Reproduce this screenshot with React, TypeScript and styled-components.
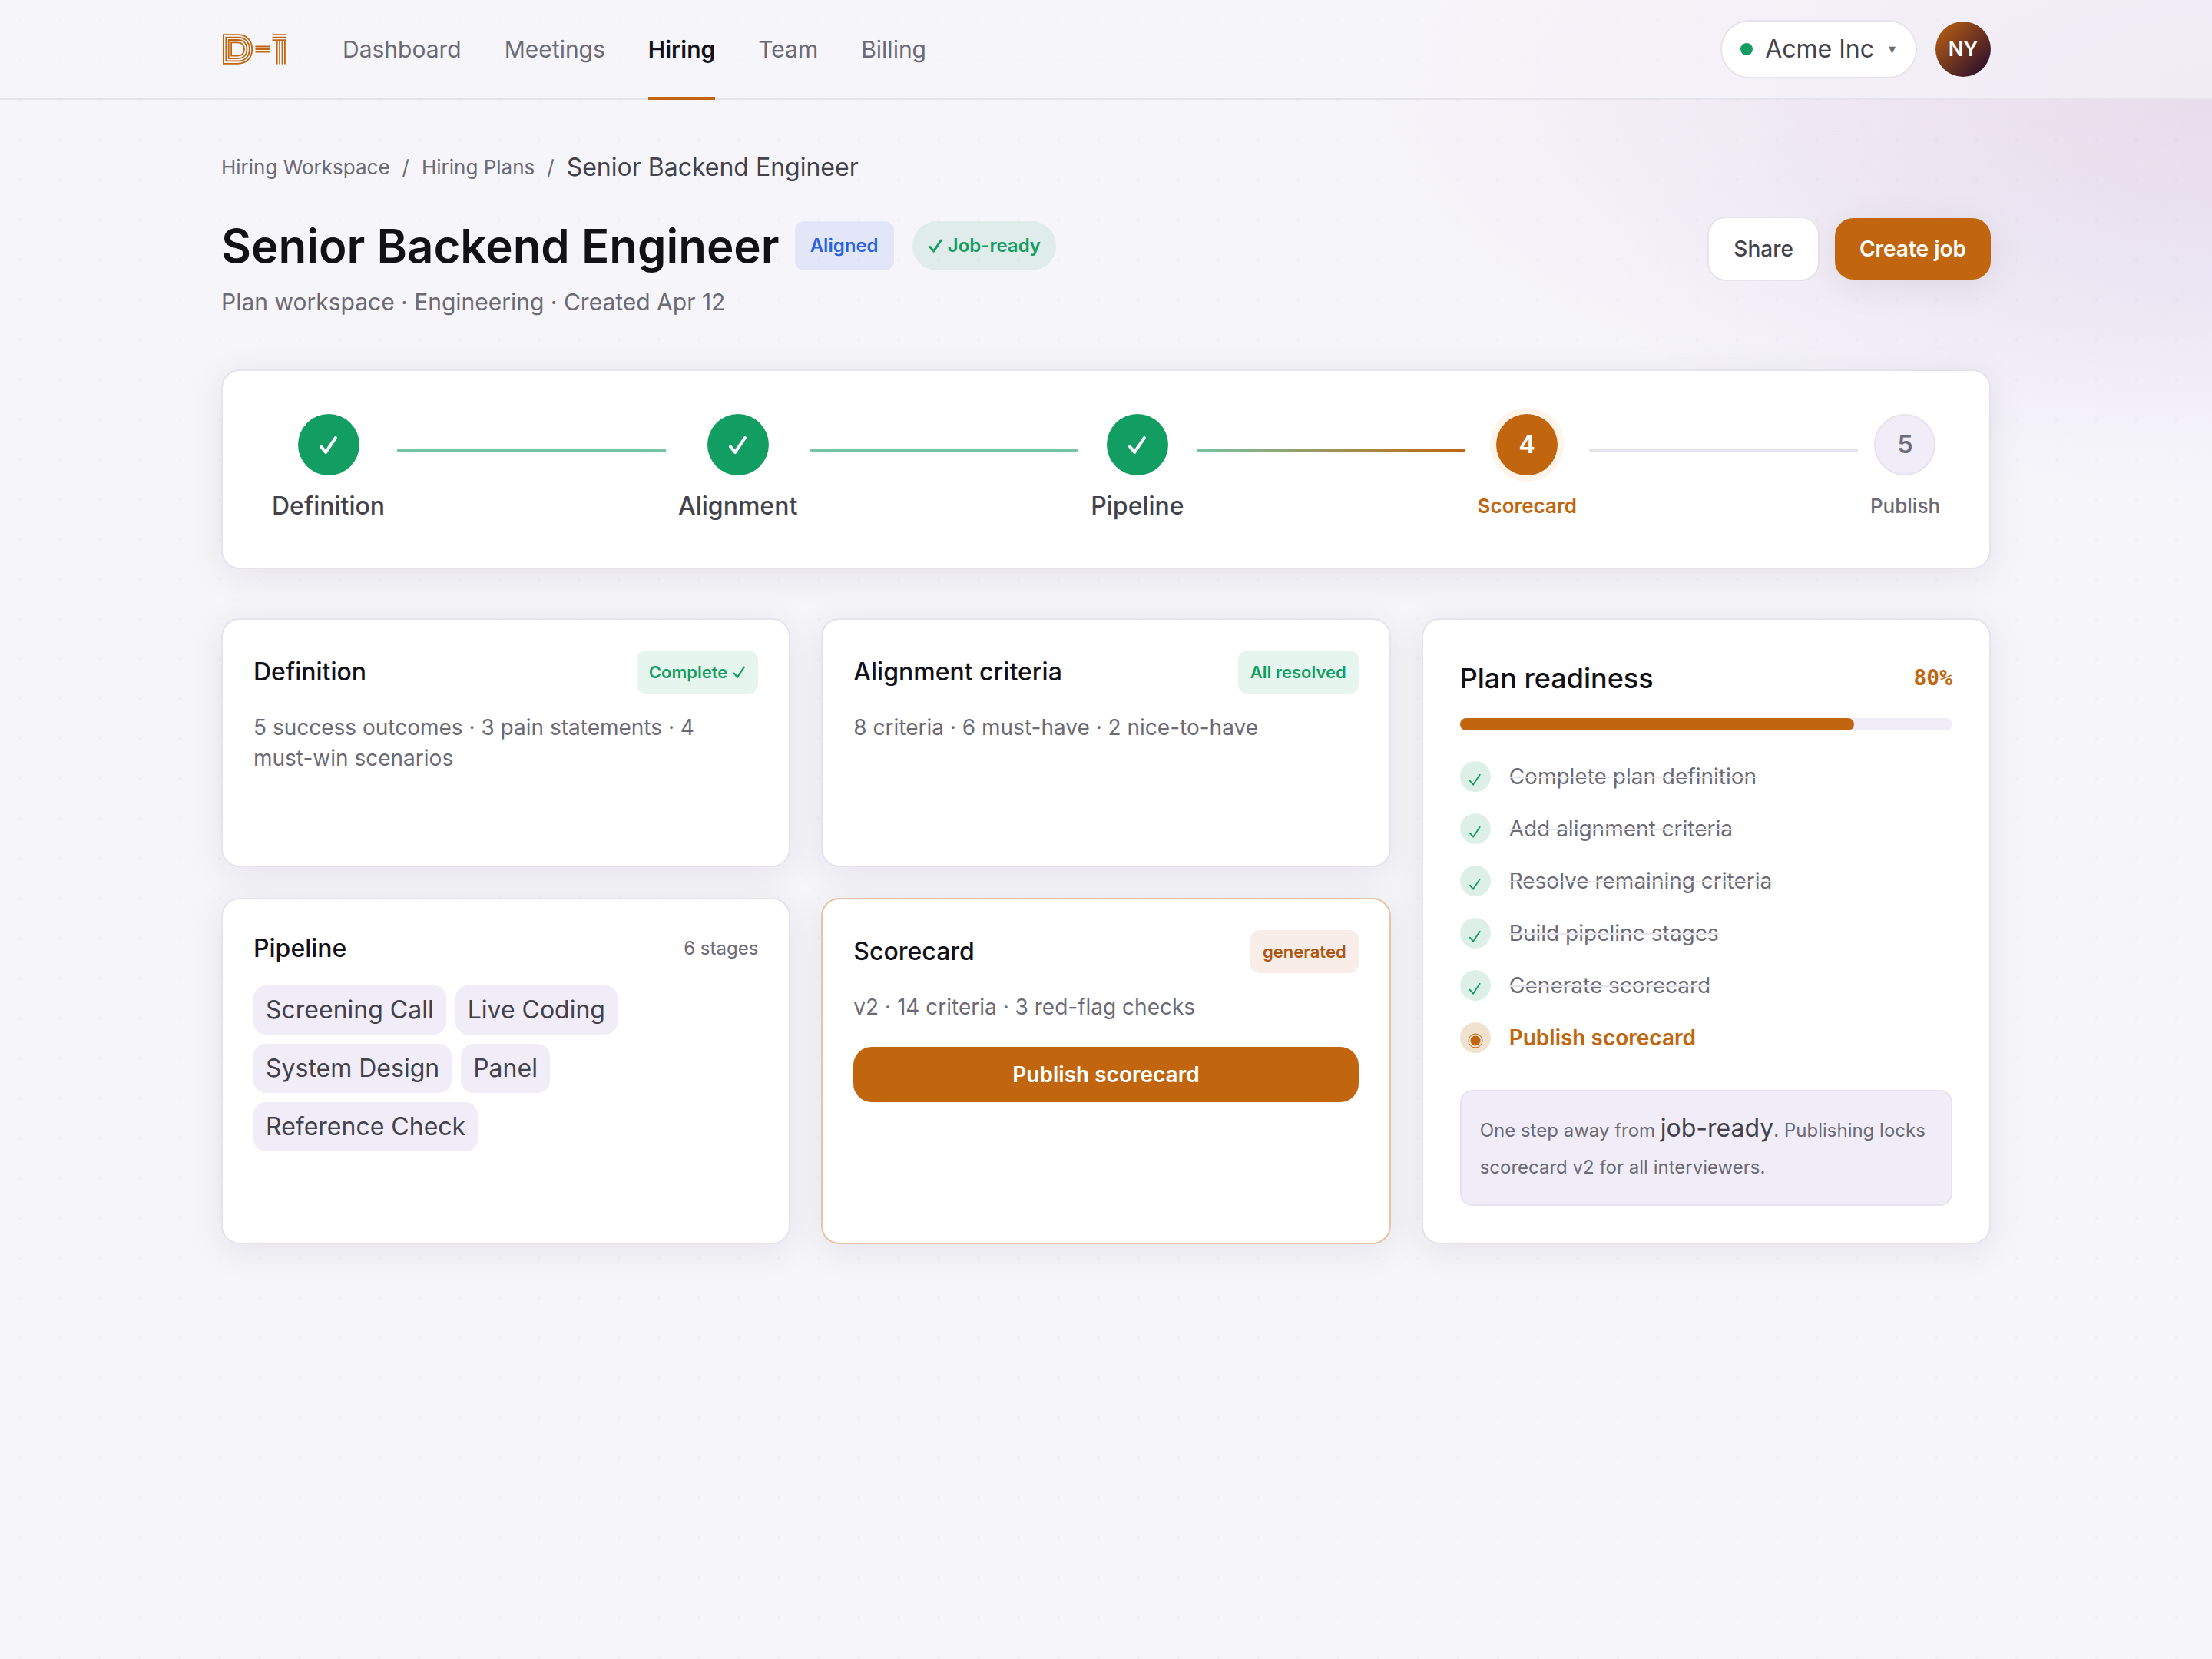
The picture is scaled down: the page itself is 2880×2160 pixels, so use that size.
import React from "react";
import styled, { createGlobalStyle, css } from "styled-components";

const color = {
  page: "#f6f5fa",
  card: "#ffffff",
  muted: "#f0edf8",
  line: "#e5e3eb",
  ink: "#121117",
  body: "#43424b",
  soft: "#6b6a75",
  brand: "#c2650f",
  green: "#129e62",
  blue: "#2b62e3",
};

const GlobalStyle = createGlobalStyle`
  *, *::before, *::after { box-sizing: border-box; }
  body {
    margin: 0;
    min-height: 100vh;
    background-color: ${color.page};
    background-image:
      radial-gradient(circle at center, rgba(40, 30, 80, 0.02) 0, rgba(40, 30, 80, 0.02) 2px, transparent 3px),
      radial-gradient(ellipse 800px 300px at 100% 360px, rgba(110, 90, 240, 0.04), transparent 100%),
      radial-gradient(ellipse 1100px 480px at 100% 110px, rgba(150, 60, 140, 0.13), transparent 100%);
    background-size: 52px 52px, 100% 100%, 100% 100%;
    background-repeat: repeat, no-repeat, no-repeat;
    color: ${color.body};
    font-family: Inter, "Liberation Sans", sans-serif;
    font-size: 32px;
    line-height: 48px;
  }
  h1, h2, p, ul, ol { margin: 0; padding: 0; }
  ul, ol { list-style: none; }
  button { font: inherit; color: inherit; cursor: pointer; }
  a { color: inherit; text-decoration: none; }
`;

const Header = styled.header`
  border-bottom: 2px solid ${color.line};
  background: rgba(246, 245, 250, 0.6);
`;

const HeaderInner = styled.div`
  display: flex;
  align-items: center;
  max-width: 2400px;
  height: 128px;
  margin: 0 auto;
  padding: 0 48px;
`;

const LogoLink = styled.a`
  display: flex;
  margin-right: 74px;
`;

const Nav = styled.nav`
  display: flex;
  gap: 56px;
  flex: 1;
`;

const NavLink = styled.a<{ $active?: boolean }>`
  position: relative;
  font-size: 30px;
  line-height: 128px;
  color: ${color.soft};
  ${(p) =>
    p.$active &&
    css`
      font-weight: 600;
      color: ${color.ink};
      &::after {
        content: "";
        position: absolute;
        left: 0;
        right: 0;
        bottom: -2px;
        height: 4px;
        background: ${color.brand};
      }
    `}
`;

const Account = styled.div`
  display: flex;
  align-items: center;
  gap: 24px;
`;

const OrgButton = styled.button`
  display: flex;
  align-items: center;
  gap: 16px;
  padding: 12px 24px;
  border: 2px solid ${color.line};
  border-radius: 38px;
  background: ${color.card};
`;

const StatusDot = styled.span`
  width: 16px;
  height: 16px;
  border-radius: 50%;
  background: ${color.green};
`;

const Caret = styled.span`
  width: 14px;
  font-size: 18px;
  text-align: center;
  color: ${color.soft};
`;

const Avatar = styled.button`
  width: 72px;
  height: 72px;
  padding: 0;
  border: 0;
  border-radius: 50%;
  background: linear-gradient(135deg, ${color.brand}, #1f0630);
  color: #fff;
  font-size: 26px;
  font-weight: 600;
`;

const Main = styled.main`
  max-width: 2400px;
  margin: 0 auto;
  padding: 64px 48px;
`;

const Crumbs = styled.ol`
  display: flex;
  align-items: center;
  gap: 16px;
  margin-bottom: 32px;
  font-size: 26px;
  color: ${color.soft};
`;

const CurrentCrumb = styled.li`
  font-size: 32px;
  color: ${color.body};
`;

const PageHead = styled.div`
  display: flex;
  align-items: flex-start;
  justify-content: space-between;
  margin-bottom: 64px;
`;

const TitleRow = styled.div`
  display: flex;
  align-items: center;
  gap: 20px;
  margin-bottom: 4px;
`;

const Badges = styled.div`
  display: flex;
  gap: 24px;
`;

const Title = styled.h1`
  font-size: 60px;
  line-height: 92px;
  font-weight: 600;
  color: ${color.ink};
`;

const Subtitle = styled.p`
  font-size: 30px;
  line-height: 47px;
  color: ${color.soft};
`;

const tones = {
  blue: css`
    background: rgba(60, 90, 235, 0.1);
    color: ${color.blue};
  `,
  green: css`
    background: rgba(18, 158, 98, 0.1);
    color: ${color.green};
  `,
  brand: css`
    background: #f8ede8;
    color: #ad5610;
  `,
};

const Badge = styled.span<{ $tone: keyof typeof tones; $large?: boolean; $pill?: boolean }>`
  padding: ${(p) => (p.$large ? "8px 20px" : "4px 16px")};
  border-radius: ${(p) => (p.$pill ? "32px" : "12px")};
  font-size: ${(p) => (p.$large ? "24px" : "22px")};
  font-weight: 600;
  white-space: nowrap;
  ${(p) => tones[p.$tone]}
`;

const Actions = styled.div`
  display: flex;
  align-items: center;
  gap: 20px;
  padding-top: 8px;
`;

const ShareButton = styled.button`
  padding: 16px 32px;
  border: 2px solid ${color.line};
  border-radius: 24px;
  background: ${color.card};
  font-size: 28px;
  font-weight: 500;
`;

const PrimaryButton = styled.button<{ $block?: boolean }>`
  border: 0;
  border-radius: 24px;
  background: ${color.brand};
  color: #fff;
  font-size: 28px;
  font-weight: 600;
  ${(p) =>
    p.$block
      ? css`
          display: block;
          width: 100%;
          margin-top: 32px;
          padding: 12px 32px;
        `
      : css`
          padding: 16px 32px;
          box-shadow: 0 8px 48px rgba(20, 17, 35, 0.08);
        `}
`;

const Card = styled.section<{ $accent?: boolean }>`
  padding: 40px;
  border: 2px solid ${(p) => (p.$accent ? "#e6c3a2" : color.line)};
  border-radius: 24px;
  background: ${color.card};
  box-shadow: 0 8px 48px rgba(20, 17, 35, 0.08);
`;

const Stepper = styled(Card).attrs({ as: "ol" })`
  display: flex;
  gap: 16px;
  margin-bottom: 64px;
  padding: 56px 64px;
`;

type StepState = "done" | "active" | "todo";

const Step = styled.li`
  display: flex;
  flex-direction: column;
  align-items: center;
  gap: 16px;
`;

const stepLook = {
  done: css`
    background: ${color.green};
    color: #fff;
  `,
  active: css`
    background: ${color.brand};
    color: #fff;
    box-shadow: 0 0 0 8px #fff4ea;
  `,
  todo: css`
    border: 2px solid ${color.line};
    background: ${color.muted};
    color: ${color.soft};
  `,
};

const StepCircle = styled.span<{ $state: StepState }>`
  display: flex;
  align-items: center;
  justify-content: center;
  width: 80px;
  height: 80px;
  border-radius: 50%;
  font-size: 32px;
  font-weight: 600;
  ${(p) => stepLook[p.$state]}
`;

const stepText = {
  done: css`
    font-weight: 500;
  `,
  active: css`
    font-size: 26px;
    font-weight: 600;
    color: ${color.brand};
  `,
  todo: css`
    font-size: 26px;
    font-weight: 500;
    color: ${color.soft};
  `,
};

const StepLabel = styled.span<{ $state: StepState }>`
  ${(p) => stepText[p.$state]}
`;

const connectorFill = {
  done: "#77c3a3",
  active: `linear-gradient(90deg, #77c3a3, ${color.brand})`,
  todo: color.line,
};

const Connector = styled.li<{ $state: StepState }>`
  flex: 1;
  height: 4px;
  margin-top: 46px;
  background: ${(p) => connectorFill[p.$state]};
`;

const Grid = styled.div`
  display: grid;
  grid-template-columns: repeat(3, minmax(0, 1fr));
  gap: 40px;
`;

const CardHead = styled.div`
  display: flex;
  align-items: center;
  justify-content: space-between;
  margin-bottom: 24px;
`;

const CardTitle = styled.h2`
  font-size: 32px;
  font-weight: 500;
  color: ${color.ink};
`;

const CardText = styled.p`
  font-size: 28px;
  line-height: 40px;
  color: ${color.soft};
`;

const CardNote = styled.span`
  font-size: 24px;
  color: ${color.soft};
`;

const Chips = styled.ul`
  display: flex;
  flex-wrap: wrap;
  gap: 12px;
`;

const Chip = styled.li`
  padding: 8px 16px;
  border-radius: 16px;
  background: ${color.muted};
`;

const ReadinessCard = styled(Card)`
  grid-column: 3;
  grid-row: 1 / span 2;
  padding: 48px;
`;

const ReadinessTitle = styled.h2`
  font-size: 36px;
  line-height: 56px;
  font-weight: 500;
  color: ${color.ink};
`;

const Percent = styled.span`
  font-family: "DejaVu Sans Mono", monospace;
  font-size: 28px;
  font-weight: 700;
  color: ${color.brand};
`;

const Track = styled.div`
  height: 16px;
  border-radius: 8px;
  background: ${color.muted};
`;

const Fill = styled.div`
  height: 100%;
  border-radius: 8px;
  background: ${color.brand};
`;

const Checklist = styled.ul`
  display: flex;
  flex-direction: column;
  gap: 28px;
  margin: 40px 0 48px;
`;

const CheckItem = styled.li<{ $done: boolean }>`
  display: flex;
  align-items: center;
  gap: 24px;
  font-size: 28px;
  line-height: 40px;
  color: ${(p) => (p.$done ? color.soft : color.brand)};
  font-weight: ${(p) => (p.$done ? 400 : 600)};
`;

const CheckMark = styled.span<{ $done: boolean }>`
  display: flex;
  align-items: center;
  justify-content: center;
  width: 40px;
  height: 40px;
  padding-top: 8px;
  border-radius: 50%;
  background: ${(p) => (p.$done ? "#dcf0e8" : "#f1e1cf")};
  color: ${(p) => (p.$done ? color.green : color.brand)};
  font-size: 22px;
`;

const CheckLabel = styled.span<{ $done: boolean }>`
  text-decoration: ${(p) => (p.$done ? `line-through 2px ${color.line}` : "none")};
`;

const Notice = styled.p`
  padding: 24px;
  border: 2px solid ${color.line};
  border-radius: 16px;
  background: ${color.muted};
  font-size: 24px;
  color: ${color.soft};
`;

const Strong = styled.strong`
  font-size: 32px;
  font-weight: 400;
  color: ${color.body};
`;

const CheckSvg = styled.svg`
  width: 0.84em;
  height: 0.84em;
  vertical-align: -0.08em;
`;

const Check = ({ weight = 3 }: { weight?: number }) => (
  <CheckSvg
    viewBox="0 0 20 20"
    fill="none"
    stroke="currentColor"
    strokeWidth={weight}
    strokeLinecap="round"
    strokeLinejoin="round"
    role="img"
    aria-label="Done"
  >
    <path d="M3 11.500L7.600 17L17 3" />
  </CheckSvg>
);

const Target = () => (
  <svg width="20" height="20" viewBox="0 0 20 20" aria-hidden="true">
    <circle cx="10" cy="10" r="9" fill="none" stroke="currentColor" />
    <circle cx="10" cy="10" r="6.500" fill="currentColor" />
  </svg>
);

const Logo = () => (
  <svg width="84" height="40" viewBox="0 0 84 40" fill="none" stroke={color.brand} strokeWidth="1.8" aria-hidden="true">
    <path d="M2.9 1.2H21.5C33 1.2 40.2 8.500 40.2 20C40.200 31.500 33 38.800 21.500 38.800H2.900Z" />
    <path d="M6.300 4.600H21.500C31 4.600 36.800 10.500 36.800 20C36.800 29.500 31 35.400 21.500 35.400H6.300Z" />
    <path d="M9.700 8H21.500C29 8 33.400 12.500 33.400 20C33.400 27.500 29 32 21.500 32H9.700Z" />
    <path d="M13.100 11.400H21C27 11.400 30 14.500 30 20C30 25.500 27 28.600 21 28.600H13.100Z" />
    <path d="M44.500 16.500H63M44.500 20H63M44.500 23.500H63" />
    <path d="M66.500 1.200H84M66.500 4.600H84M66.500 8.100H84" />
    <path d="M72.700 8V39.500M76.100 8V39.500M79.500 8V39.500M82.900 8V39.500" />
  </svg>
);

const navItems = ["Dashboard", "Meetings", "Hiring", "Team", "Billing"];

const steps: { label: string; state: StepState }[] = [
  { label: "Definition", state: "done" },
  { label: "Alignment", state: "done" },
  { label: "Pipeline", state: "done" },
  { label: "Scorecard", state: "active" },
  { label: "Publish", state: "todo" },
];

const stages = ["Screening Call", "Live Coding", "System Design", "Panel", "Reference Check"];

const tasks = [
  { label: "Complete plan definition", done: true },
  { label: "Add alignment criteria", done: true },
  { label: "Resolve remaining criteria", done: true },
  { label: "Build pipeline stages", done: true },
  { label: "Generate scorecard", done: true },
  { label: "Publish scorecard", done: false },
];

const readiness = 80;

export default function App() {
  return (
    <>
      <GlobalStyle />
      <Header>
        <HeaderInner>
          <LogoLink href="#" aria-label="D-1 home">
            <Logo />
          </LogoLink>
          <Nav>
            {navItems.map((item) => (
              <NavLink key={item} href="#" $active={item === "Hiring"}>
                {item}
              </NavLink>
            ))}
          </Nav>
          <Account>
            <OrgButton type="button">
              <StatusDot />
              Acme Inc
              <Caret>▾</Caret>
            </OrgButton>
            <Avatar type="button">NY</Avatar>
          </Account>
        </HeaderInner>
      </Header>

      <Main>
        <nav aria-label="Breadcrumb">
          <Crumbs>
            <li><a href="#">Hiring Workspace</a></li>
            <li>/</li>
            <li><a href="#">Hiring Plans</a></li>
            <li>/</li>
            <CurrentCrumb>Senior Backend Engineer</CurrentCrumb>
          </Crumbs>
        </nav>

        <PageHead>
          <div>
            <TitleRow>
              <Title>Senior Backend Engineer</Title>
              <Badges>
                <Badge $tone="blue" $large>Aligned</Badge>
                <Badge $tone="green" $large $pill><Check /> Job-ready</Badge>
              </Badges>
            </TitleRow>
            <Subtitle>Plan workspace · Engineering · Created Apr 12</Subtitle>
          </div>
          <Actions>
            <ShareButton type="button">Share</ShareButton>
            <PrimaryButton type="button">Create job</PrimaryButton>
          </Actions>
        </PageHead>

        <Stepper>
          {steps.map((step, i) => (
            <React.Fragment key={step.label}>
              {i > 0 && <Connector $state={step.state} aria-hidden="true" />}
              <Step>
                <StepCircle $state={step.state}>{step.state === "done" ? <Check /> : i + 1}</StepCircle>
                <StepLabel $state={step.state}>{step.label}</StepLabel>
              </Step>
            </React.Fragment>
          ))}
        </Stepper>

        <Grid>
          <Card>
            <CardHead>
              <CardTitle>Definition</CardTitle>
              <Badge $tone="green">Complete <Check weight={2.5} /></Badge>
            </CardHead>
            <CardText>5 success outcomes · 3 pain statements · 4 must-win scenarios</CardText>
          </Card>

          <Card>
            <CardHead>
              <CardTitle>Alignment criteria</CardTitle>
              <Badge $tone="green">All resolved</Badge>
            </CardHead>
            <CardText>8 criteria · 6 must-have · 2 nice-to-have</CardText>
          </Card>

          <ReadinessCard>
            <CardHead>
              <ReadinessTitle>Plan readiness</ReadinessTitle>
              <Percent>{readiness}%</Percent>
            </CardHead>
            <Track role="progressbar" aria-valuenow={readiness} aria-label="Plan readiness">
              <Fill style={{ width: `${readiness}%` }} />
            </Track>
            <Checklist>
              {tasks.map((task) => (
                <CheckItem key={task.label} $done={task.done}>
                  <CheckMark $done={task.done}>{task.done ? <Check weight={2} /> : <Target />}</CheckMark>
                  <CheckLabel $done={task.done}>{task.label}</CheckLabel>
                </CheckItem>
              ))}
            </Checklist>
            <Notice>
              One step away from <Strong>job-ready</Strong>. Publishing locks scorecard v2 for all interviewers.
            </Notice>
          </ReadinessCard>

          <Card>
            <CardHead>
              <CardTitle>Pipeline</CardTitle>
              <CardNote>6 stages</CardNote>
            </CardHead>
            <Chips>
              {stages.map((stage) => (
                <Chip key={stage}>{stage}</Chip>
              ))}
            </Chips>
          </Card>

          <Card $accent>
            <CardHead>
              <CardTitle>Scorecard</CardTitle>
              <Badge $tone="brand">generated</Badge>
            </CardHead>
            <CardText>v2 · 14 criteria · 3 red-flag checks</CardText>
            <PrimaryButton type="button" $block>Publish scorecard</PrimaryButton>
          </Card>
        </Grid>
      </Main>
    </>
  );
}
